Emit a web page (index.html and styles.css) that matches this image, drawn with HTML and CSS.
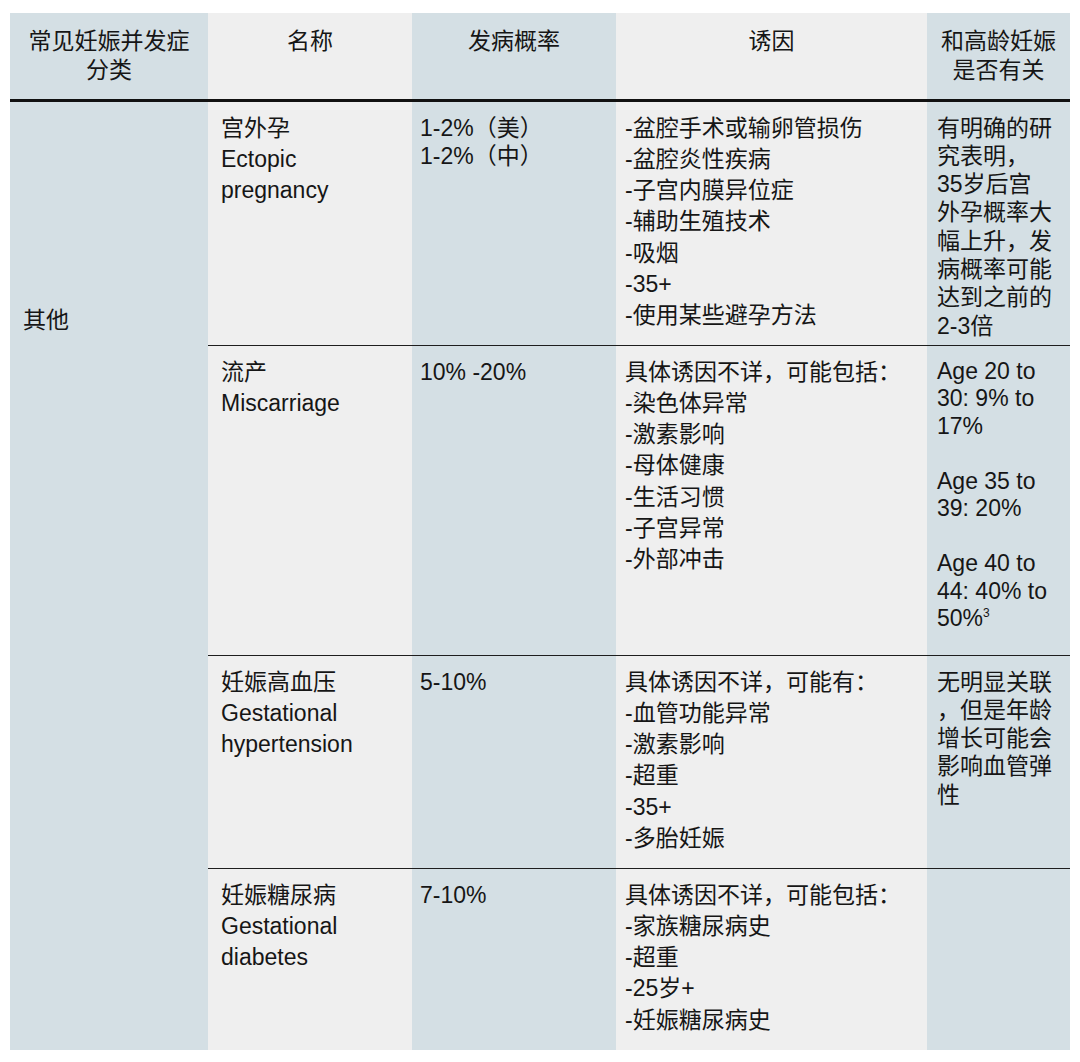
FILE: index.html
```html
<!DOCTYPE html>
<html lang="zh-CN">
<head>
<meta charset="utf-8">
<title>常见妊娠并发症</title>
<link rel="stylesheet" href="styles.css">
</head>
<body>
<table class="tbl">
  <colgroup>
    <col class="c1"><col class="c2"><col class="c3"><col class="c4"><col class="c5">
  </colgroup>
  <thead>
    <tr class="head">
      <th class="shade">常见妊娠并发症<br>分类</th>
      <th class="light">名称</th>
      <th class="shade">发病概率</th>
      <th class="light">诱因</th>
      <th class="shade">和高龄妊娠<br>是否有关</th>
    </tr>
  </thead>
  <tbody>
    <tr class="r1">
      <td class="shade cat" rowspan="4">其他</td>
      <td class="light name">宫外孕<br>Ectopic<br>pregnancy</td>
      <td class="shade rate">1-2%（美）<br>1-2%（中）</td>
      <td class="light cause">-盆腔手术或输卵管损伤<br>-盆腔炎性疾病<br>-子宫内膜异位症<br>-辅助生殖技术<br>-吸烟<br>-35+<br>-使用某些避孕方法</td>
      <td class="shade rel">有明确的研<br>究表明，<br>35岁后宫<br>外孕概率大<br>幅上升，发<br>病概率可能<br>达到之前的<br>2-3倍</td>
    </tr>
    <tr class="r2">
      <td class="light name">流产<br>Miscarriage</td>
      <td class="shade rate">10% -20%</td>
      <td class="light cause">具体诱因不详，可能包括：<br>-染色体异常<br>-激素影响<br>-母体健康<br>-生活习惯<br>-子宫异常<br>-外部冲击</td>
      <td class="shade rel en"><p>Age 20 to<br>30: 9% to<br>17%</p><p>Age 35 to<br>39: 20%</p><p>Age 40 to<br>44: 40% to<br>50%<sup>3</sup></p></td>
    </tr>
    <tr class="r3">
      <td class="light name">妊娠高血压<br>Gestational<br>hypertension</td>
      <td class="shade rate">5-10%</td>
      <td class="light cause">具体诱因不详，可能有：<br>-血管功能异常<br>-激素影响<br>-超重<br>-35+<br>-多胎妊娠</td>
      <td class="shade rel">无明显关联<br>，但是年龄<br>增长可能会<br>影响血管弹<br>性</td>
    </tr>
    <tr class="r4">
      <td class="light name">妊娠糖尿病<br>Gestational<br>diabetes</td>
      <td class="shade rate">7-10%</td>
      <td class="light cause">具体诱因不详，可能包括：<br>-家族糖尿病史<br>-超重<br>-25岁+<br>-妊娠糖尿病史</td>
      <td class="shade rel"></td>
    </tr>
  </tbody>
</table>
</body>
</html>
```

FILE: styles.css
```css
html, body {
  margin: 0;
  background: #ffffff;
}
body {
  padding: 13px 10px 0 10px;
  font-family: "Liberation Sans", "Noto Sans CJK SC", sans-serif;
  font-size: 23px;
  color: #161616;
}
.tbl {
  border-collapse: collapse;
  table-layout: fixed;
  width: 1060px;
}
.c1 { width: 198px; }
.c2 { width: 204px; }
.c3 { width: 204px; }
.c4 { width: 311px; }
.c5 { width: 143px; }

.shade { background: #d4dfe4; }
.light { background: #efefef; }

th, td {
  padding: 0;
  vertical-align: top;
  text-align: left;
  font-weight: normal;
}
.head th {
  height: 87px;
  box-sizing: border-box;
  padding-top: 14px;
  line-height: 29px;
  text-align: center;
  border-bottom: 3px solid #111111;
}
tbody td {
  border-top: 1px solid #1e1e1e;
  padding-top: 11px;
  line-height: 31.3px;
}
tbody tr.r1 td { border-top: none; }
.r1 { height: 245px; }
.r2 { height: 310px; }
.r3 { height: 213px; }
.r4 { height: 182px; }

.cat {
  padding-left: 13px;
  padding-top: 203px !important;
  border-top: none;
}
.name { padding-left: 13px; }
.rate { padding-left: 8px; line-height: 28.5px; padding-top: 12px; }
.cause { padding-left: 9px; }
.rel { padding-left: 10px; line-height: 28.3px; padding-top: 12px; }
.rel.en p {
  margin: 0 0 27.5px 0;
  line-height: 27.5px;
}
.rel.en p:last-child { margin-bottom: 0; }
sup {
  font-size: 12px;
  line-height: 0;
  vertical-align: 9px;
}
```
